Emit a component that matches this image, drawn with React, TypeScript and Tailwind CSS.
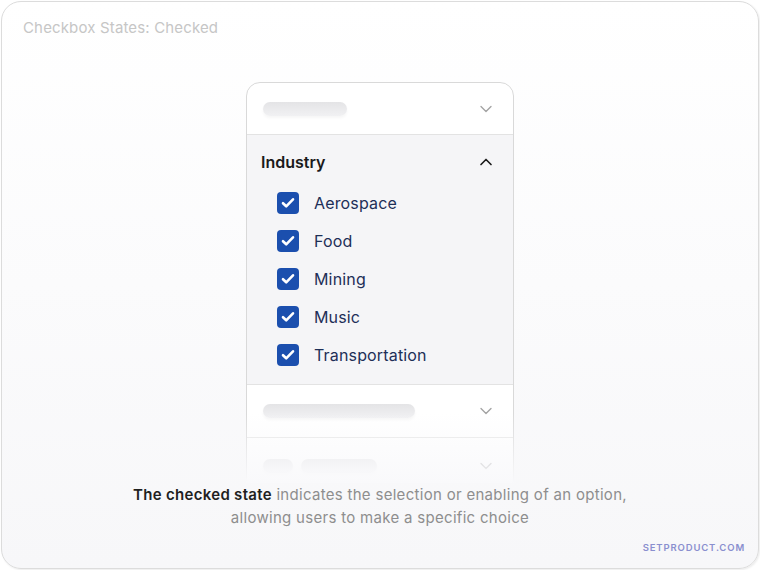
import { ChevronDown, ChevronUp } from 'lucide-react'

const industries = ['Aerospace', 'Food', 'Mining', 'Music', 'Transportation']

function Skeleton({ className }: { className: string }) {
  return (
    <div
      className={`h-[14px] rounded-full bg-gradient-to-b from-[#e4e4e6] to-[#f1f1f3] shadow-[0_2px_3px_rgba(0,0,0,0.04)] ${className}`}
    />
  )
}

function CheckItem({ label }: { label: string }) {
  return (
    <div className="flex h-[38px] items-center pl-[30px]">
      <span className="flex h-[22px] w-[22px] items-center justify-center rounded-[4px] bg-[#1b4fae]">
        <svg viewBox="0 0 16 16" className="h-[16px] w-[16px]" fill="none">
          <path d="M3 8.2l3.2 3.1 6.8-7" stroke="white" strokeWidth="2.6" strokeLinecap="round" strokeLinejoin="round" />
        </svg>
      </span>
      <span className="ml-[15px] text-[16px] tracking-[0.01em] text-[#1e2f57]">{label}</span>
    </div>
  )
}

export default function App() {
  return (
    <div className="h-[570px] w-[760px] bg-white p-px font-['Inter',sans-serif]">
      <div className="relative flex h-full flex-col rounded-[20px] border border-[#dcdcdc] bg-gradient-to-b from-white to-[#f7f7f9] shadow-[1px_1px_2px_rgba(0,0,0,0.08)]">
        <p className="pl-[21px] pt-[16px] text-[15px] leading-[20px] tracking-[0.01em] text-[#c6c6c6]">Checkbox States: Checked</p>

        {/* Accordion panel, faded at the bottom */}
        <div className="relative mx-auto mt-[44px] h-[401px] w-[268px] overflow-hidden">
          <div className="rounded-[14px] border border-[#d9d9d9] bg-white">
            <div className="flex h-[51px] items-center justify-between pl-[16px] pr-[17px]">
              <Skeleton className="w-[84px]" />
              <ChevronDown className="h-[20px] w-[20px] text-[#a3a3a3]" strokeWidth={1.6} />
            </div>

            <div className="border-y border-[#e3e3e3] bg-[#f5f5f7]">
              <div className="flex h-[37px] items-end justify-between pl-[14px] pr-[17px]">
                <span className="text-[16px] font-semibold leading-[20px] text-[#1a1a1a]">Industry</span>
                <ChevronUp className="mb-[0px] h-[20px] w-[20px] text-[#1a1a1a]" strokeWidth={2} />
              </div>
              <div className="pb-[10px] pt-[12px]">
                {industries.map((i) => (
                  <CheckItem key={i} label={i} />
                ))}
              </div>
            </div>

            <div className="flex h-[52px] items-center justify-between pl-[16px] pr-[17px]">
              <Skeleton className="w-[152px]" />
              <ChevronDown className="h-[20px] w-[20px] text-[#a3a3a3]" strokeWidth={1.6} />
            </div>

            <div className="flex h-[56px] items-center justify-between border-t border-[#e6e6e6] pl-[16px] pr-[17px]">
              <div className="flex gap-[8px]">
                <Skeleton className="w-[30px]" />
                <Skeleton className="w-[76px]" />
              </div>
              <ChevronDown className="h-[20px] w-[20px] text-[#a3a3a3]" strokeWidth={1.6} />
            </div>
          </div>
          <div className="absolute inset-x-0 bottom-0 h-[70px] bg-gradient-to-b from-[rgba(249,249,251,0)] to-[#f9f9fb]" />
        </div>

        <p className="mx-auto text-center text-[15px] leading-[23px] tracking-[0.02em] text-[#8e8e8e]">
          <span className="font-semibold text-[#1f1f1f]">The checked state</span> indicates the selection or enabling of an option,
          <br />
          allowing users to make a specific choice
        </p>

        <p className="absolute bottom-[13px] right-[13px] text-[9.5px] font-semibold tracking-[0.09em] text-[#8a8fcf]">
          SETPRODUCT.COM
        </p>
      </div>
    </div>
  )
}
